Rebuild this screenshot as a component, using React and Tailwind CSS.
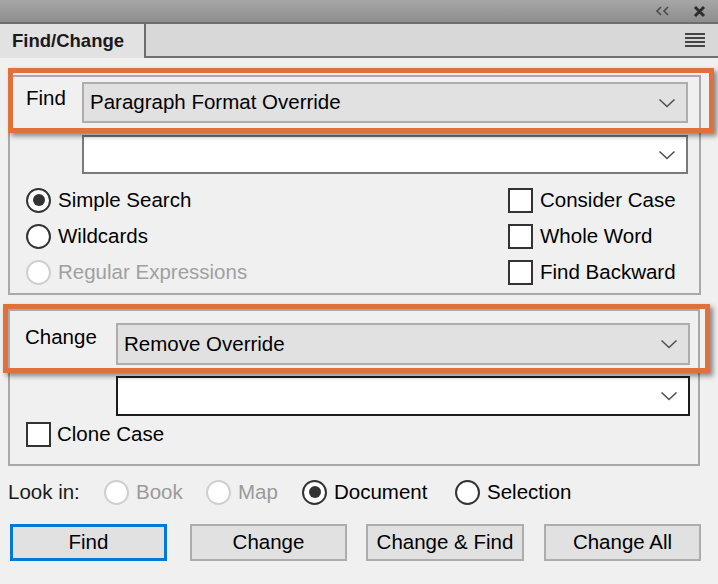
function Chevron() {
  return (
    <svg width="18" height="10" viewBox="0 0 18 10" className="shrink-0">
      <path d="M1.5 1.5 L9 8.5 L16.5 1.5" fill="none" stroke="#505050" strokeWidth="1.6" />
    </svg>
  );
}

function Dropdown({ value, white, dark, className }) {
  const tone = white
    ? dark
      ? "bg-white border-[#1c1c1c]"
      : "bg-white border-[#7a7a7a]"
    : "bg-[#e1e1e1] border-[#adadad]";
  return (
    <div className={`flex shrink-0 items-center justify-between border-2 pl-[6px] pr-[10px] ${tone} ${className}`}>
      <span className="whitespace-nowrap leading-[1.2] text-black">{value}</span>
      <Chevron />
    </div>
  );
}

function Radio({ checked, disabled }) {
  return (
    <span
      className={`flex h-[25px] w-[25px] shrink-0 items-center justify-center rounded-full border-2 bg-white ${
        disabled ? "border-[#cfcfcf]" : "border-[#333]"
      }`}
    >
      {checked ? <span className="h-[12px] w-[12px] rounded-full bg-[#333]" /> : null}
    </span>
  );
}

function RadioRow({ label, checked, disabled }) {
  return (
    <div className="flex h-[36px] items-center gap-[7px]">
      <Radio checked={checked} disabled={disabled} />
      <span className={disabled ? "text-[#a0a0a0]" : "text-black"}>{label}</span>
    </div>
  );
}

function Check({ label }) {
  return (
    <div className="flex h-[36px] items-center gap-[7px]">
      <span className="h-[25px] w-[25px] shrink-0 border-2 border-[#333] bg-white" />
      <span className="text-black">{label}</span>
    </div>
  );
}

function Button({ label, focused, className }) {
  return (
    <div
      className={`flex h-[37px] items-center justify-center bg-[#e1e1e1] text-black ${
        focused ? "border-[3px] border-[#0078d7]" : "border-2 border-[#adadad]"
      } ${className}`}
    >
      {label}
    </div>
  );
}

export default function App() {
  return (
    <div className="relative flex h-[584px] w-[718px] flex-col overflow-hidden bg-[#f0f0f0] font-['Liberation_Sans',Arial,sans-serif] text-[20.5px] leading-none">
      {/* title strip */}
      <div className="flex h-[24px] shrink-0 items-center justify-end gap-[22px] border-b-2 border-[#6e6e6e] bg-gradient-to-b from-[#a6a6a6] to-[#8e8e8e] pr-[12px]">
        <svg width="16" height="10" viewBox="0 0 16 10">
          <path d="M6 1 L2 5 L6 9 M13 1 L9 5 L13 9" fill="none" stroke="#4a4a4a" strokeWidth="1.6" />
        </svg>
        <svg width="13" height="13" viewBox="0 0 13 13">
          <path d="M2 2 L11 11 M11 2 L2 11" fill="none" stroke="#2e2e2e" strokeWidth="3" />
        </svg>
      </div>

      {/* tab bar */}
      <div className="flex h-[34px] shrink-0 bg-[#d8d8d8]">
        <div className="flex w-[146px] items-center border-r-2 border-[#6e6e6e] bg-[#e2e2e2] pl-[12px] text-[18.5px] font-bold text-[#1a1a1a]">
          Find/Change
        </div>
        <div className="flex flex-1 items-center justify-end border-b-2 border-[#6e6e6e] pr-[13px]">
          <div className="flex w-[20px] flex-col gap-[2px]">
            <span className="h-[2px] bg-[#444]" />
            <span className="h-[2px] bg-[#444]" />
            <span className="h-[2px] bg-[#444]" />
            <span className="h-[2px] bg-[#444]" />
          </div>
        </div>
      </div>

      {/* find group */}
      <div className="ml-[8px] mt-[17px] w-[693px] border-2 border-[#a9a9a9] px-[9px] pb-[3px] pt-[5px]">
        <div className="flex">
          <span className="w-[63px] shrink-0 pl-[7px] pt-[6px] text-black">Find</span>
          <Dropdown value="Paragraph Format Override" className="h-[41px] w-[606px]" />
        </div>
        <div className="mt-[12px] flex pl-[63px]">
          <Dropdown value="" white className="h-[39px] w-[606px]" />
        </div>
        <div className="mt-[8px] flex">
          <div className="flex-1 pl-[7px]">
            <RadioRow label="Simple Search" checked />
            <RadioRow label="Wildcards" />
            <RadioRow label="Regular Expressions" disabled />
          </div>
          <div className="w-[182px]">
            <Check label="Consider Case" />
            <Check label="Whole Word" />
            <Check label="Find Backward" />
          </div>
        </div>
      </div>

      {/* change group */}
      <div className="ml-[8px] mt-[14px] w-[692px] border-2 border-[#a9a9a9] px-[9px] pb-[14px] pt-[12px]">
        <div className="flex">
          <span className="w-[97px] shrink-0 pl-[6px] pt-[4px] text-black">Change</span>
          <Dropdown value="Remove Override" className="h-[42px] w-[574px]" />
        </div>
        <div className="mt-[11px] flex pl-[97px]">
          <Dropdown value="" white dark className="h-[40px] w-[574px]" />
        </div>
        <div className="mt-[2px] flex h-[32px] items-center gap-[6px] pl-[7px]">
          <span className="h-[25px] w-[25px] shrink-0 border-2 border-[#333] bg-white" />
          <span className="text-black">Clone Case</span>
        </div>
      </div>

      {/* look in */}
      <div className="mt-[12px] flex h-[28px] items-center pl-[8px]">
        <span className="w-[96px] text-[#1a1a1a]">Look in:</span>
        <div className="flex w-[102px] items-center gap-[7px]">
          <Radio disabled />
          <span className="text-[#9a9a9a]">Book</span>
        </div>
        <div className="flex w-[96px] items-center gap-[7px]">
          <Radio disabled />
          <span className="text-[#9a9a9a]">Map</span>
        </div>
        <div className="flex w-[153px] items-center gap-[7px]">
          <Radio checked />
          <span className="text-black">Document</span>
        </div>
        <div className="flex items-center gap-[7px]">
          <Radio />
          <span className="text-black">Selection</span>
        </div>
      </div>

      {/* buttons */}
      <div className="mt-[18px] flex pl-[10px]">
        <Button label="Find" focused className="w-[157px]" />
        <Button label="Change" className="ml-[23px] w-[157px]" />
        <Button label="Change & Find" className="ml-[19px] w-[158px]" />
        <Button label="Change All" className="ml-[20px] w-[157px]" />
      </div>

      {/* orange callouts drawn over the dialog */}
      <div className="pointer-events-none absolute left-[8px] top-[68px] h-[65px] w-[706px] border-[5px] border-[#e0703c] shadow-[3px_3px_5px_rgba(0,0,0,0.45)]" />
      <div className="pointer-events-none absolute left-[3px] top-[304px] h-[69px] w-[707px] border-[5px] border-[#e0703c] shadow-[3px_3px_5px_rgba(0,0,0,0.45)]" />
    </div>
  );
}
